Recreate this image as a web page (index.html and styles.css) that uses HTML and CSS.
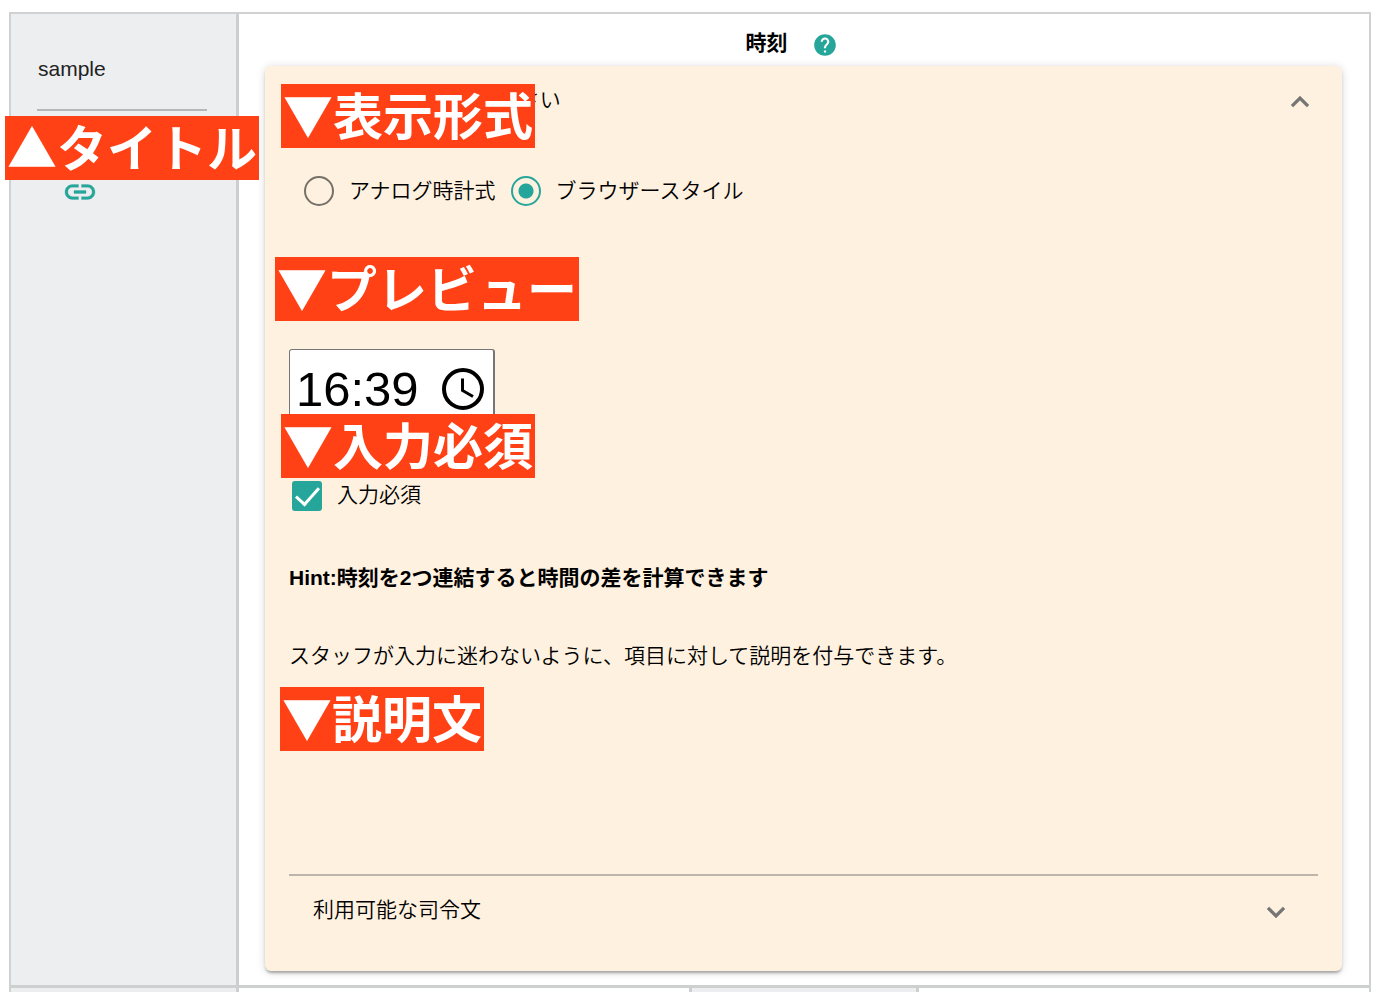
FILE: index.html
```html
<!DOCTYPE html>
<html lang="ja">
<head>
<meta charset="utf-8">
<meta name="viewport" content="width=device-width, initial-scale=1">
<title>時刻</title>
<link rel="stylesheet" href="styles.css">
</head>
<body>
<main class="sheet">
  <div class="row">
    <aside class="side">
      <input class="title-input" type="text" value="sample" aria-label="タイトル">
      <a class="link" href="#link" aria-label="連結">
        <svg viewBox="0 0 24 24" width="36" height="36"><path fill="currentColor" stroke="currentColor" stroke-width=".2" d="M3.9 12c0-1.710 1.390-3.100 3.100-3.100h4V7H7c-2.760 0-5 2.240-5 5s2.240 5 5 5h4v-1.900H7c-1.710 0-3.100-1.390-3.100-3.100zM8 13h8v-2H8v2zm9-6h-4v1.900h4c1.710 0 3.100 1.390 3.100 3.100s-1.390 3.100-3.100 3.100h-4V17h4c2.760 0 5-2.240 5-5s-2.240-5-5-5z"/></svg>
      </a>
      <span class="tag tag-title">▲タイトル</span>
    </aside>
    <div class="content">
      <header class="head">
        <h1>時刻</h1>
        <button class="plain help" type="button" aria-label="ヘルプ">
          <svg viewBox="0 0 24 24" width="26" height="26"><path fill="currentColor" d="M12 2C6.480 2 2 6.480 2 12s4.480 10 10 10 10-4.480 10-10S17.520 2 12 2zm1 17h-2v-2h2v2zm2.070-7.750l-.9.920C13.450 12.900 13 13.500 13 15h-2v-.5c0-1.100.45-2.100 1.170-2.830l1.240-1.260c.37-.36.59-.86.59-1.410 0-1.100-.9-2-2-2s-2 .9-2 2H8c0-2.210 1.790-4 4-4s4 1.790 4 4c0 .88-.36 1.680-.93 2.250z"/></svg>
        </button>
      </header>
      <section class="card">
        <div class="block format">
          <div class="bar">
            <p>表示形式を選択してください</p>
            <button class="plain" type="button" aria-label="閉じる">
              <svg viewBox="0 0 24 24" width="36" height="36"><path fill="currentColor" stroke="currentColor" stroke-width=".3" d="M12 8l-6 6 1.410 1.410L12 10.830l4.590 4.580L18 14z"/></svg>
            </button>
          </div>
          <div class="radios">
            <label><input type="radio" name="style">アナログ時計式</label>
            <label><input type="radio" name="style" checked>ブラウザースタイル</label>
          </div>
          <span class="tag tag-format">▼表示形式</span>
        </div>
        <div class="block preview">
          <div class="time">
            <input type="text" value="16:39" aria-label="時刻">
            <button class="plain" type="button" aria-label="時刻を選択">
              <svg viewBox="0 0 42 42" width="42" height="42" fill="none" stroke="currentColor"><circle cx="21" cy="21" r="19" stroke-width="4"/><path stroke-width="3" d="M20.500 10.500V22.500L31 28.500"/></svg>
            </button>
          </div>
          <span class="tag tag-preview">▼プレビュー</span>
        </div>
        <div class="block required">
          <label><input type="checkbox" checked><span>入力必須</span></label>
          <span class="tag tag-required">▼入力必須</span>
        </div>
        <p class="hint">Hint:時刻を2つ連結すると時間の差を計算できます</p>
        <div class="block note">
          <p>スタッフが入力に迷わないように、項目に対して説明を付与できます。</p>
          <span class="tag tag-note">▼説明文</span>
        </div>
        <div class="bar commands">
          <p>利用可能な司令文</p>
          <button class="plain" type="button" aria-label="開く">
            <svg viewBox="0 0 24 24" width="36" height="36"><path fill="currentColor" stroke="currentColor" stroke-width=".3" d="M16.590 8.590L12 13.170 7.410 8.590 6 10l6 6 6-6z"/></svg>
          </button>
        </div>
      </section>
    </div>
  </div>
  <div class="next">
    <div class="shade"></div><div></div><div class="shade"></div><div></div>
  </div>
</main>
</body>
</html>
```
FILE: styles.css
```css
* { box-sizing: border-box; }
body {
  margin: 0;
  height: 100vh;
  overflow: hidden;
  padding: 12px 13px 0 9px;
  background: #fff;
  color: #000;
  font-family: "Liberation Sans", "Noto Sans CJK JP", sans-serif;
  font-size: 21px;
  font-weight: 350;
  line-height: 30px;
}
h1, p { margin: 0; font-size: inherit; }
.sheet { border: 2px solid #d0d1d2; border-bottom: 0; }
.row { display: grid; grid-template-columns: 228px 1fr; }
.side {
  position: relative;
  padding: 40px 29px 0 26px;
  background: #edeef0;
  border-right: 3px solid #cdcecf;
}
.title-input {
  display: block;
  width: 100%;
  height: 57px;
  padding: 0 0 26px 1px;
  border: 0;
  border-bottom: 2px solid #b6b7b9;
  background: transparent;
  color: #222;
  font: inherit;
}
.link { display: block; width: 36px; margin: 63px 0 0 25px; color: #26a69a; }
svg { display: block; }
.content { padding: 14px 27px 14px 26px; }
.head { display: flex; justify-content: center; align-items: center; gap: 24px; height: 38px; padding: 0 24px 8px 0; }
.head h1 { color: #000; }
.plain { padding: 0; border: 0; background: none; color: #757575; }
.plain.help { color: #26a69a; padding-top: 4px; }
.card {
  padding: 16px 24px 24px;
  background: #fff1df;
  border-radius: 6px;
  box-shadow: 0 3px 3px -1px rgba(0,0,0,.3), 0 1px 8px rgba(0,0,0,.16);
}
.block { position: relative; }
.bar { display: flex; align-items: center; justify-content: space-between; height: 36px; }
.format .bar button { padding-top: 4px; }
.format { height: 267px; }
.radios { display: flex; gap: 15px; padding: 58px 0 0 15px; }
label { display: flex; align-items: center; gap: 15px; }
input[type="radio"], input[type="checkbox"] { appearance: none; flex: none; width: 30px; height: 30px; margin: 0; }
input[type="radio"] { border: 2px solid #757068; border-radius: 50%; }
input[type="radio"]:checked { border-color: #26a69a; background: radial-gradient(circle, #26a69a 7px, transparent 8px); }
.preview { height: 132px; }
.time {
  display: flex;
  align-items: center;
  width: 206px;
  height: 80px;
  padding: 0 9px 0 6px;
  border: 1px solid #767676;
  border-right-width: 2px;
  border-radius: 3px;
  background: #fff;
}
.time input { flex: 1; min-width: 0; padding: 0; border: 0; background: none; color: #000; font: 49px "Liberation Sans", sans-serif; }
.time button { color: #000; }
.required { padding-left: 3px; margin-bottom: 52px; }
.required label span { padding-bottom: 3px; line-height: 27px; }
input[type="checkbox"] { display: grid; place-items: center; border-radius: 3px; background: #26a69a; }
input[type="checkbox"]::after { content: ""; width: 10px; height: 20px; margin-bottom: 6px; border: solid #fff; border-width: 0 3px 3px 0; transform: rotate(42deg); }
.hint { margin-bottom: 48px; color: #000; font-weight: bold; }
.note { height: 233px; }
.commands { height: 73px; padding: 0 24px; border-top: 2px solid #bdb5aa; }
.commands p { padding-bottom: 3px; }
.tag {
  position: absolute;
  z-index: 1;
  height: 64px;
  padding: 0 2px;
  background: #ff4115;
  color: #fff;
  font: bold 50px/58px "Noto Sans CJK JP", sans-serif;
  white-space: nowrap;
}
.tag-title { left: -6px; top: 102px; }
.tag-format { left: -8px; top: 2px; }
.tag-preview { left: -14px; top: -92px; }
.tag-required { left: -8px; top: -67px; }
.tag-note { left: -9px; top: 46px; }
.next {
  display: grid;
  grid-template-columns: 228px 453px 227px 1fr;
  border-top: 3px solid #cecfcf;
}
.next div { height: 48px; border-right: 3px solid #cdcecf; }
.next div:last-child { border-right: 0; }
.next .shade { background: #edeef0; }
```
